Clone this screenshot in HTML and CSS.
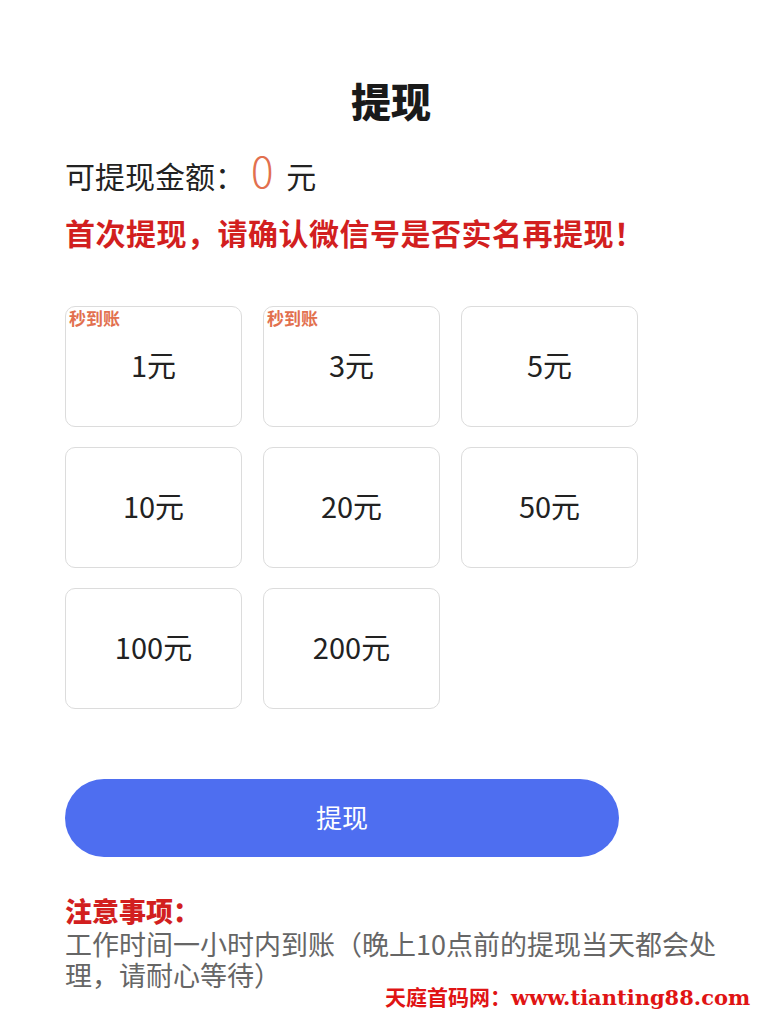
FILE: index.html
```html
<!DOCTYPE html>
<html lang="zh-CN">
<head>
  <meta charset="UTF-8">
  <meta name="viewport" content="width=device-width, initial-scale=1.0">
  <title>提现</title>
  <link rel="stylesheet" href="styles.css">
</head>
<body>
  <div class="page">
    <h1 class="title">提现</h1>

    <p class="balance">可提现金额：<span class="balance-num">0</span> 元</p>
    <p class="warning">首次提现，请确认微信号是否实名再提现！</p>

    <!-- amount options -->
    <div class="amounts">
      <div class="amount-card"><span class="tag">秒到账</span>1元</div>
      <div class="amount-card"><span class="tag">秒到账</span>3元</div>
      <div class="amount-card">5元</div>
      <div class="amount-card">10元</div>
      <div class="amount-card">20元</div>
      <div class="amount-card">50元</div>
      <div class="amount-card">100元</div>
      <div class="amount-card">200元</div>
    </div>

    <button class="submit-button">提现</button>

    <div class="notes">
      <h2 class="notes-title">注意事项：</h2>
      <p class="notes-text">工作时间一小时内到账（晚上10点前的提现当天都会处理，请耐心等待）</p>
    </div>
  </div>

  <div class="watermark">天庭首码网：<span class="watermark-url">www.tianting88.com</span></div>
</body>
</html>
```

FILE: styles.css
```css
* {
  box-sizing: border-box;
  margin: 0;
  padding: 0;
}

body {
  width: 767px;
  min-height: 1024px;
  position: relative;
  background: #fff;
  font-family: "Noto Sans CJK SC", "Noto Sans", sans-serif;
  color: #222;
}

.page {
  padding: 76px 30px 0 65px;
}

.title {
  text-align: center;
  font-size: 40px;
  line-height: 48px;
  font-weight: 900;
  color: #1a1a1a;
  padding-right: 20px;
}

.balance {
  margin-top: 26px;
  height: 40px;
  font-size: 30px;
  line-height: 40px;
  color: #222;
}

.balance-num {
  font-size: 42px;
  line-height: 40px;
  font-weight: 300;
  color: #e2704e;
  margin: 0 6px;
}

.warning {
  margin-top: 22px;
  font-size: 30px;
  line-height: 40px;
  letter-spacing: 0.5px;
  font-weight: 700;
  color: #d21f1f;
}

.amounts {
  margin-top: 54px;
  display: grid;
  grid-template-columns: repeat(3, 177px);
  column-gap: 21px;
  row-gap: 20px;
}

.amount-card {
  position: relative;
  height: 121px;
  padding-bottom: 6px;
  display: flex;
  justify-content: center;
  align-items: center;
  border: 1.5px solid #dcdcdc;
  border-radius: 10px;
  font-size: 29px;
  color: #222;
}

.tag {
  position: absolute;
  top: 1px;
  left: 3px;
  font-size: 17px;
  line-height: 20px;
  font-weight: 700;
  color: #e2704e;
}

.submit-button {
  display: block;
  margin-top: 70px;
  width: 554px;
  height: 78px;
  padding-bottom: 4px;
  border: none;
  border-radius: 39px;
  background: #4e6ef0;
  color: #fff;
  font-family: inherit;
  font-size: 26px;
}

.notes {
  margin-top: 37px;
}

.notes-title {
  font-size: 27px;
  line-height: 34px;
  font-weight: 900;
  color: #d21f1f;
}

.notes-text {
  font-size: 27px;
  line-height: 31px;
  color: #666;
}

.watermark {
  position: absolute;
  left: 385px;
  top: 989px;
  font-size: 21px;
  line-height: 14px;
  font-weight: 700;
  color: #e01414;
  white-space: nowrap;
}

.watermark-url {
  font-family: "DejaVu Serif", serif;
  font-weight: 700;
}
```
